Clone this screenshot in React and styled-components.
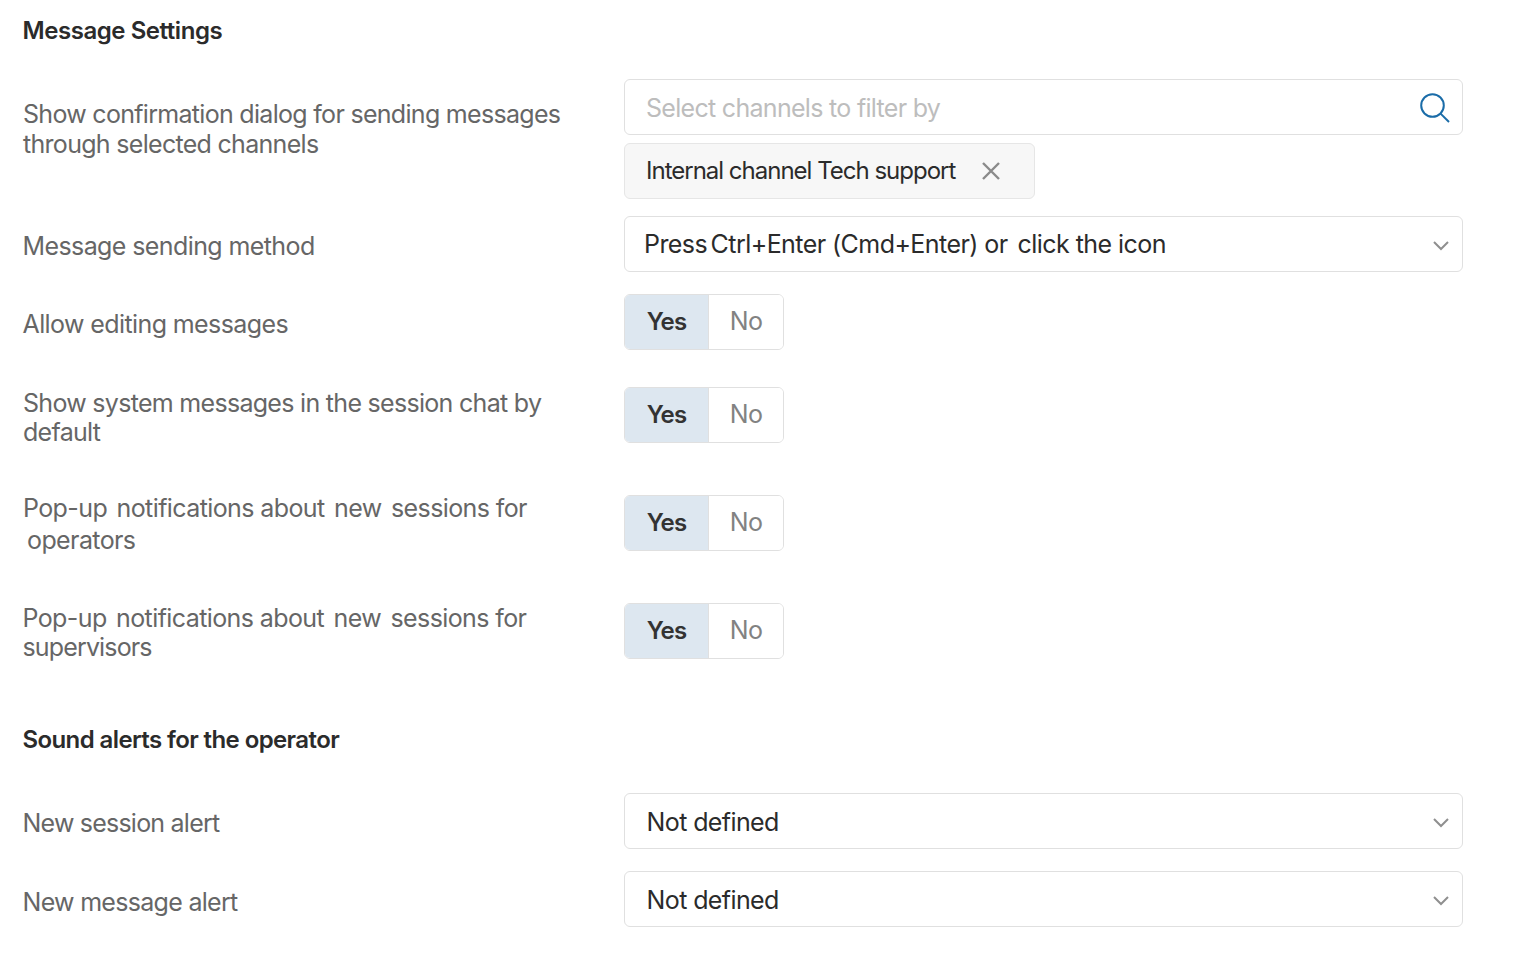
import React from "react";
import styled, { createGlobalStyle } from "styled-components";

const GlobalStyle = createGlobalStyle`
    html, body {
        margin: 0;
        padding: 0;
        background-color: #ffffff;
    }
    body {
        font-family: "Inter", "Liberation Sans", sans-serif;
    }
`

const Page = styled.div`
    width: 1521px;
    height: 958px;
    box-sizing: border-box;
    padding: 15px 0 0 23px;
    overflow: hidden;
`

const Heading = styled.div`
    color: #2b2b2b;
    font-size: 24px;
    font-weight: 600;
    line-height: 32px;
    letter-spacing: ${(p) => p.$ls || -0.6}px;
    margin: ${(p) => p.$top || 0}px 0 0 -0.5px;
`

const Row = styled.div`
    display: grid;
    grid-template-columns: 601px 839px;
    margin-top: ${(p) => p.$top || 0}px;
`

const Label = styled.div`
    color: #666666;
    font-size: 25px;
    letter-spacing: ${(p) => p.$ls || -0.7}px;
    line-height: ${(p) => p.$lh || 30}px;
    padding-top: ${(p) => p.$pad || 0}px;
    margin-top: ${(p) => p.$raise || 0}px;
    margin-left: ${(p) => p.$shift || 0}px;
    width: 560px;
`

/* the source text has uneven gaps between some words */
const Words = styled.span`
    word-spacing: ${(p) => p.$ws}px;
`

const Indent = styled.span`
    display: inline-block;
    width: ${(p) => p.$w}px;
`

const TightLine = styled.span`
    letter-spacing: -0.85px;
`

const Field = styled.div`
    display: flex;
    flex-direction: column;
    align-items: flex-start;
    gap: 8px;
`

const Box = styled.div`
    width: 100%;
    height: 56px;
    box-sizing: border-box;
    display: flex;
    align-items: center;
    justify-content: space-between;
    padding: 0 12px 0 ${(p) => p.$left || 21}px;
    background-color: #ffffff;
    border: 1px solid #e0e0e0;
    border-radius: 6px;
    color: #2b2b2b;
    font-size: 25px;
    letter-spacing: -0.6px;
`

const Placeholder = styled.span`
    color: #bdbdbd;
    letter-spacing: -0.7px;
    margin-top: 2px;
`

const Value = styled.span`
    margin-top: 2px;
`

const MethodText = styled.span`
    letter-spacing: -0.56px;
`

const Chip = styled.div`
    height: 56px;
    box-sizing: border-box;
    display: flex;
    align-items: center;
    gap: 26px;
    padding: 0 33px 1px 21px;
    background-color: #f7f7f7;
    border: 1px solid #e6e6e6;
    border-radius: 6px;
    color: #2b2b2b;
    font-size: 24px;
    letter-spacing: -1px;
`

const Toggle = styled.div`
    display: flex;
    width: 160px;
    height: 56px;
    box-sizing: border-box;
    border: 1px solid #e0e0e0;
    border-radius: 6px;
    overflow: hidden;
`

const ToggleOption = styled.div`
    flex: ${(p) => (p.$active ? "0 0 84px" : "1")};
    box-sizing: border-box;
    display: flex;
    align-items: center;
    justify-content: center;
    padding-bottom: 2px;
    font-size: ${(p) => (p.$active ? 24 : 25)}px;
    letter-spacing: ${(p) => (p.$active ? -0.8 : -0.6)}px;
    font-weight: ${(p) => (p.$active ? 600 : 400)};
    color: ${(p) => (p.$active ? "#333333" : "#828282")};
    background-color: ${(p) => (p.$active ? "#dde7f0" : "#ffffff")};
    border-right: ${(p) => (p.$active ? "1px solid #e0e0e0" : "none")};
`

const Icon = styled.svg`
    display: block;
    flex: none;
`

const Chevron = styled(Icon)`
    margin: 3px 1px 0 0;
`

function SearchIcon() {
    return (
        <Icon width="32" height="32" viewBox="0 0 32 32" fill="none" stroke="#1a6ca8" strokeWidth="2">
            <circle cx="14.5" cy="14.5" r="11.3" />
            <path d="M22.6 22.6l8.4 8.4" />
        </Icon>
    )
}

function CloseIcon() {
    return (
        <Icon width="20" height="20" viewBox="0 0 20 20" fill="none" stroke="#8a8a8a" strokeWidth="2.4">
            <path d="M2 2l16 16M18 2L2 18" />
        </Icon>
    )
}

function ChevronIcon() {
    return (
        <Chevron width="16" height="10" viewBox="0 0 16 10" fill="none" stroke="#8f8f8f" strokeWidth="2">
            <path d="M1 1l7 7 7-7" />
        </Chevron>
    )
}

function YesNo() {
    return (
        <Toggle>
            <ToggleOption $active>Yes</ToggleOption>
            <ToggleOption>No</ToggleOption>
        </Toggle>
    )
}

function App() {
    return (
        <Page>
            <GlobalStyle />
            <Heading $ls={-0.45}>Message Settings</Heading>

            <Row $top={32}>
                <Label $pad={20}>Show confirmation dialog for sending messages through selected channels</Label>
                <Field>
                    <Box>
                        <Placeholder>Select channels to filter by</Placeholder>
                        <SearchIcon />
                    </Box>
                    <Chip>
                        Internal channel Tech support
                        <CloseIcon />
                    </Chip>
                </Field>
            </Row>

            <Row $top={17}>
                <Label $pad={15} $ls={-0.6} $shift={-0.5}>Message sending method</Label>
                <Field>
                    <Box $left={19}>
                        <MethodText>
                            <Words $ws={-3}>Press </Words>Ctrl+Enter (Cmd+Enter) <Words $ws={3.5}>or </Words>click the icon
                        </MethodText>
                        <ChevronIcon />
                    </Box>
                </Field>
            </Row>

            <Row $top={22}>
                <Label $pad={15} $ls={-0.6} $shift={-0.5}>Allow editing messages</Label>
                <YesNo />
            </Row>

            <Row $top={37}>
                <Label $lh={29} $pad={2}>Show system messages in the session chat by default</Label>
                <YesNo />
            </Row>

            <Row $top={48}>
                <Label $lh={32} $raise={-3} $ls={-0.6}>
                    <Words $ws={3}>Pop-up </Words>notifications <Words $ws={3}>about new </Words>sessions for
                    <br />
                    <Indent $w={4} />operators
                </Label>
                <YesNo />
            </Row>

            <Row $top={47}>
                <Label $lh={29} $pad={1} $ls={-0.6} $shift={-0.5}>
                    <Words $ws={3}>Pop-up </Words>notifications <Words $ws={3}>about new </Words>sessions for
                    <br />
                    <TightLine>supervisors</TightLine>
                </Label>
                <YesNo />
            </Row>

            <Heading $top={62}>Sound alerts for the operator</Heading>

            <Row $top={37}>
                <Label $pad={15} $ls={-0.78} $shift={-0.5}>New session alert</Label>
                <Field>
                    <Box $left={21.5}>
                        <Value>Not defined</Value>
                        <ChevronIcon />
                    </Box>
                </Field>
            </Row>

            <Row $top={22}>
                <Label $pad={16} $shift={-0.5}>New message alert</Label>
                <Field>
                    <Box $left={21.5}>
                        <Value>Not defined</Value>
                        <ChevronIcon />
                    </Box>
                </Field>
            </Row>
        </Page>
    )
}

export default App
